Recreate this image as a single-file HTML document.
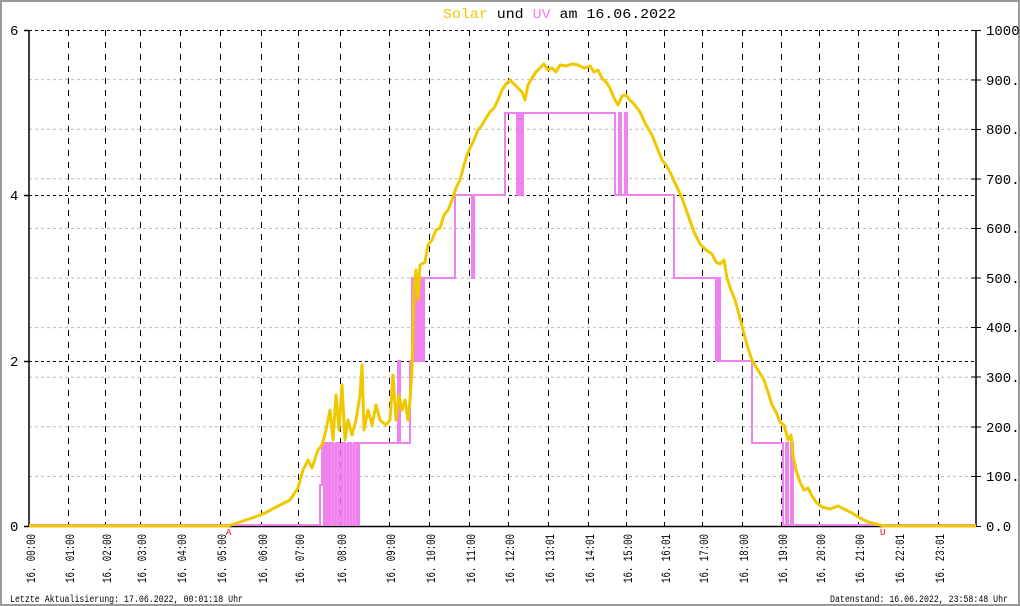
<!DOCTYPE html>
<html><head><meta charset="utf-8"><style>
html,body{margin:0;padding:0;background:#fff}
svg{display:block}
text{font-family:"Liberation Mono","DejaVu Sans Mono",monospace}
</style></head><body>
<svg width="1020" height="606" viewBox="0 0 1020 606" xmlns="http://www.w3.org/2000/svg">
<rect x="1" y="1" width="1018" height="604" fill="#fff" stroke="#999" stroke-width="2"/>
<text x="443" y="18" font-size="14" textLength="233" lengthAdjust="spacingAndGlyphs"><tspan fill="#f0c800">Solar</tspan> und <tspan fill="#ee82ee">UV</tspan> am 16.06.2022</text>
<g stroke="#bbb" stroke-width="1" stroke-dasharray="3,3">
<line x1="29" x2="976" y1="79.6" y2="79.6"/><line x1="29" x2="976" y1="129.2" y2="129.2"/>
<line x1="29" x2="976" y1="178.8" y2="178.8"/><line x1="29" x2="976" y1="228.4" y2="228.4"/>
<line x1="29" x2="976" y1="278" y2="278"/><line x1="29" x2="976" y1="327.6" y2="327.6"/>
<line x1="29" x2="976" y1="377.2" y2="377.2"/><line x1="29" x2="976" y1="426.8" y2="426.8"/>
<line x1="29" x2="976" y1="476.4" y2="476.4"/>
</g>
<g stroke="#000" stroke-width="1" stroke-dasharray="3,3">
<line x1="29" x2="976" y1="30.5" y2="30.5"/><line x1="29" x2="976" y1="195.5" y2="195.5"/><line x1="29" x2="976" y1="361.5" y2="361.5"/>
</g>
<g stroke="#000" stroke-width="1" stroke-dasharray="6,6">
<line x1="68.5" x2="68.5" y1="30" y2="526"/><line x1="105.5" x2="105.5" y1="30" y2="526"/><line x1="140.5" x2="140.5" y1="30" y2="526"/><line x1="180.5" x2="180.5" y1="30" y2="526"/><line x1="220.5" x2="220.5" y1="30" y2="526"/><line x1="261.5" x2="261.5" y1="30" y2="526"/><line x1="298.5" x2="298.5" y1="30" y2="526"/><line x1="340.5" x2="340.5" y1="30" y2="526"/><line x1="389.5" x2="389.5" y1="30" y2="526"/><line x1="429.5" x2="429.5" y1="30" y2="526"/><line x1="469.5" x2="469.5" y1="30" y2="526"/><line x1="508.5" x2="508.5" y1="30" y2="526"/><line x1="548.5" x2="548.5" y1="30" y2="526"/><line x1="588.5" x2="588.5" y1="30" y2="526"/><line x1="626.5" x2="626.5" y1="30" y2="526"/><line x1="664.5" x2="664.5" y1="30" y2="526"/><line x1="702.5" x2="702.5" y1="30" y2="526"/><line x1="742.5" x2="742.5" y1="30" y2="526"/><line x1="781.5" x2="781.5" y1="30" y2="526"/><line x1="819.5" x2="819.5" y1="30" y2="526"/><line x1="858.5" x2="858.5" y1="30" y2="526"/><line x1="898.5" x2="898.5" y1="30" y2="526"/><line x1="938.5" x2="938.5" y1="30" y2="526"/>
</g>
<g stroke="#000" stroke-width="1.5">
<line x1="29" x2="29" y1="30" y2="527"/><line x1="976" x2="976" y1="30" y2="527"/>
<line x1="29" x2="976" y1="526.5" y2="526.5"/>
<line x1="24" x2="29" y1="30.5" y2="30.5"/><line x1="24" x2="29" y1="195.5" y2="195.5"/><line x1="24" x2="29" y1="361.5" y2="361.5"/><line x1="24" x2="29" y1="526.5" y2="526.5"/>
</g>
<g stroke="#000" stroke-width="1">
<line x1="971" x2="981" y1="30.5" y2="30.5"/><line x1="971" x2="981" y1="80" y2="80"/><line x1="971" x2="981" y1="129.5" y2="129.5"/><line x1="971" x2="981" y1="179" y2="179"/><line x1="971" x2="981" y1="228.5" y2="228.5"/><line x1="971" x2="981" y1="278" y2="278"/><line x1="971" x2="981" y1="327.5" y2="327.5"/><line x1="971" x2="981" y1="377" y2="377"/><line x1="971" x2="981" y1="427" y2="427"/><line x1="971" x2="981" y1="476.5" y2="476.5"/><line x1="971" x2="981" y1="526.5" y2="526.5"/>
</g>
<g font-size="14" fill="#000">
<text x="10" y="35">6</text><text x="10" y="200">4</text><text x="10" y="366">2</text><text x="10" y="531">0</text>
</g>
<g font-size="14" fill="#000">
<text x="986" y="35">1000</text><text x="986" y="85">900.0</text><text x="986" y="134">800.0</text><text x="986" y="184">700.0</text><text x="986" y="233">600.0</text><text x="986" y="283">500.0</text><text x="986" y="332">400.0</text><text x="986" y="382">300.0</text><text x="986" y="432">200.0</text><text x="986" y="481">100.0</text><text x="986" y="531">0.0</text>
</g>
<path fill="none" stroke="#ee82ee" stroke-width="2" d="M29,525 L320,525 L320,485 L322,485 L322,443 L324,443 L324,525 L326,525 L326,443 L328,443 L328,525 L330,525 L330,443 L333,443 L333,525 L336,525 L336,443 L339,443 L339,525 L342,525 L342,443 L345,443 L345,525 L348,525 L348,443 L351,443 L351,525 L354,525 L354,443 L357,443 L357,525 L359,525 L359,443 L398,443 L398,361 L400,361 L400,443 L410,443 L410,361 L412,361 L412,278 L414,278 L414,361 L416,361 L416,278 L418,278 L418,361 L420,361 L420,278 L422,278 L422,361 L424,361 L424,278 L455,278 L455,195 L472,195 L472,278 L474,278 L474,195 L505,195 L505,113 L517,113 L517,195 L519,195 L519,113 L521,113 L521,195 L523,195 L523,113 L615,113 L615,195 L619,195 L619,113 L621,113 L621,195 L625,195 L625,113 L627,113 L627,195 L674,195 L674,278 L716,278 L716,361 L718,361 L718,278 L720,278 L720,361 L752,361 L752,443 L783,443 L783,525 L786,525 L786,443 L788,443 L788,525 L791,525 L791,443 L793,443 L793,525 L976,525"/>
<rect x="326" y="443" width="32" height="82" fill="#ee82ee" opacity="0.85"/>
<rect x="412" y="278" width="12" height="83" fill="#ee82ee" opacity="0.85"/>
<path fill="none" stroke="#f0c800" stroke-width="3" stroke-linejoin="round" d="M29,526 L228,526 L240,522 L255,517 L265,513 L280,505 L290,500 L298,488 L303,470 L308,460 L312,468 L318,450 L322,445 L326,430 L330,410 L333,440 L336,395 L339,430 L342,385 L345,440 L348,420 L352,435 L356,420 L360,395 L362,365 L364,430 L368,410 L372,425 L376,405 L380,420 L386,425 L390,420 L393,375 L396,420 L399,395 L402,410 L405,400 L408,420 L410,400 L412,370 L414,290 L416,270 L418,300 L420,265 L425,262 L428,245 L432,240 L436,230 L440,228 L444,215 L448,210 L452,200 L456,188 L460,180 L464,165 L467,155 L470,148 L474,140 L478,130 L482,125 L486,118 L490,112 L494,108 L498,100 L502,90 L506,84 L510,80 L514,84 L518,88 L522,92 L525,100 L528,85 L532,78 L536,72 L540,68 L544,64 L548,70 L552,68 L556,72 L560,65 L566,66 L572,64 L578,65 L584,68 L590,66 L594,72 L598,70 L602,78 L606,82 L610,88 L614,98 L618,105 L622,96 L626,95 L630,100 L634,104 L640,112 L646,125 L652,135 L658,150 L662,160 L666,165 L670,172 L676,185 L682,198 L688,215 L694,232 L700,244 L706,250 L712,254 L716,262 L720,264 L724,260 L727,278 L731,290 L735,300 L740,318 L744,334 L748,348 L752,360 L758,370 L764,380 L768,392 L772,405 L776,412 L780,422 L784,425 L788,440 L791,435 L793,455 L796,470 L800,482 L804,490 L808,488 L812,496 L816,502 L822,507 L830,509 L838,506 L846,510 L852,513 L860,518 L868,522 L876,524 L884,526 L976,526"/>
<text x="226" y="535" font-size="9" fill="#e00000">A</text>
<text x="880" y="535" font-size="9" fill="#e00000">U</text>
<g font-size="13" fill="#000">
<text transform="translate(35,583) rotate(-90)" textLength="49" lengthAdjust="spacingAndGlyphs">16. 00:00</text>
<text transform="translate(74,583) rotate(-90)" textLength="49" lengthAdjust="spacingAndGlyphs">16. 01:00</text>
<text transform="translate(111,583) rotate(-90)" textLength="49" lengthAdjust="spacingAndGlyphs">16. 02:00</text>
<text transform="translate(146,583) rotate(-90)" textLength="49" lengthAdjust="spacingAndGlyphs">16. 03:00</text>
<text transform="translate(186,583) rotate(-90)" textLength="49" lengthAdjust="spacingAndGlyphs">16. 04:00</text>
<text transform="translate(226,583) rotate(-90)" textLength="49" lengthAdjust="spacingAndGlyphs">16. 05:00</text>
<text transform="translate(267,583) rotate(-90)" textLength="49" lengthAdjust="spacingAndGlyphs">16. 06:00</text>
<text transform="translate(304,583) rotate(-90)" textLength="49" lengthAdjust="spacingAndGlyphs">16. 07:00</text>
<text transform="translate(346,583) rotate(-90)" textLength="49" lengthAdjust="spacingAndGlyphs">16. 08:00</text>
<text transform="translate(395,583) rotate(-90)" textLength="49" lengthAdjust="spacingAndGlyphs">16. 09:00</text>
<text transform="translate(435,583) rotate(-90)" textLength="49" lengthAdjust="spacingAndGlyphs">16. 10:00</text>
<text transform="translate(475,583) rotate(-90)" textLength="49" lengthAdjust="spacingAndGlyphs">16. 11:00</text>
<text transform="translate(514,583) rotate(-90)" textLength="49" lengthAdjust="spacingAndGlyphs">16. 12:00</text>
<text transform="translate(554,583) rotate(-90)" textLength="49" lengthAdjust="spacingAndGlyphs">16. 13:01</text>
<text transform="translate(594,583) rotate(-90)" textLength="49" lengthAdjust="spacingAndGlyphs">16. 14:01</text>
<text transform="translate(632,583) rotate(-90)" textLength="49" lengthAdjust="spacingAndGlyphs">16. 15:00</text>
<text transform="translate(670,583) rotate(-90)" textLength="49" lengthAdjust="spacingAndGlyphs">16. 16:01</text>
<text transform="translate(708,583) rotate(-90)" textLength="49" lengthAdjust="spacingAndGlyphs">16. 17:00</text>
<text transform="translate(748,583) rotate(-90)" textLength="49" lengthAdjust="spacingAndGlyphs">16. 18:00</text>
<text transform="translate(787,583) rotate(-90)" textLength="49" lengthAdjust="spacingAndGlyphs">16. 19:00</text>
<text transform="translate(825,583) rotate(-90)" textLength="49" lengthAdjust="spacingAndGlyphs">16. 20:00</text>
<text transform="translate(864,583) rotate(-90)" textLength="49" lengthAdjust="spacingAndGlyphs">16. 21:00</text>
<text transform="translate(904,583) rotate(-90)" textLength="49" lengthAdjust="spacingAndGlyphs">16. 22:01</text>
<text transform="translate(944,583) rotate(-90)" textLength="49" lengthAdjust="spacingAndGlyphs">16. 23:01</text>
</g>
<text x="10" y="602" font-size="10" fill="#000" textLength="233" lengthAdjust="spacingAndGlyphs">Letzte Aktualisierung: 17.06.2022, 00:01:18 Uhr</text>
<text x="830" y="602" font-size="10" fill="#000" textLength="178" lengthAdjust="spacingAndGlyphs">Datenstand: 16.06.2022, 23:58:48 Uhr</text>
</svg>
</body></html>
